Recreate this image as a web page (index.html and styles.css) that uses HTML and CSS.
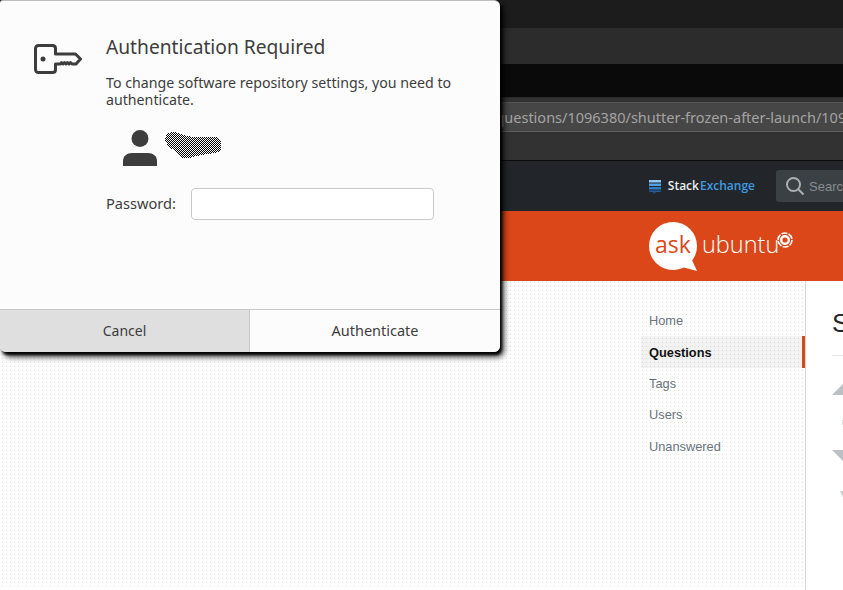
FILE: index.html
```html
<!DOCTYPE html>
<html>
<head>
  <title>Authentication Required</title>
  <link rel="stylesheet" href="styles.css">
</head>
<body>

  <!-- Browser behind the dialog -->
  <div class="browser">
    <div class="bar-title"></div>
    <div class="bar-menu"></div>
    <div class="bar-tabs"></div>
    <div class="bar-url">
      <div class="url-field">askubuntu.com/questions/1096380/shutter-frozen-after-launch/1096380#1096380</div>
    </div>

    <div class="se-bar">
      <div class="se-logo">
        <svg width="14" height="15" viewBox="0 0 14 15">
          <path d="M1 1h12v2.500H1z" fill="#8fc8f2"/>
          <path d="M1 4.500h12V7H1z" fill="#4ea3e6"/>
          <path d="M1 8h12v2.500H1z" fill="#2b7ec4"/>
          <path d="M1 11.500h12c0 1-.6 1.500-1.500 1.500H8l-2.500 2v-2h-3C1.600 13 1 12.500 1 11.500z" fill="#1f5f9e"/>
        </svg>
        <span class="se-stack">Stack</span><span class="se-exchange">Exchange</span>
      </div>
      <div class="se-search">
        <svg width="20" height="20" viewBox="0 0 20 20" fill="none" stroke="#a9b0b5" stroke-width="2">
          <circle cx="8.500" cy="8.500" r="6.500"/>
          <path d="M13.500 13.500l5 5"/>
        </svg>
        <span>Search</span>
      </div>
    </div>

    <div class="brand-bar">
      <div class="brand">
        <div class="ask-bubble">ask</div>
        <span class="brand-name">ubuntu</span>
        <svg class="cof" width="16" height="16" viewBox="0 0 16 16" fill="none" stroke="#fff">
          <circle cx="8" cy="8" r="3.800" stroke-width="2.400"/>
          <circle cx="8" cy="8" r="7" stroke-width="1.600" stroke-dasharray="6 1.300"/>
        </svg>
      </div>
    </div>

    <div class="content">
      <nav class="side-nav">
        <a>Home</a>
        <a class="active">Questions</a>
        <a>Tags</a>
        <a>Users</a>
        <a>Unanswered</a>
      </nav>
      <div class="question">
        <div class="q-title">S</div>
        <div class="q-rule"></div>
        <div class="vote-up"></div>
        <div class="vote-count"></div>
        <div class="vote-down"></div>
        <div class="vote-star"></div>
      </div>
    </div>
  </div>

  <!-- Auth dialog -->
  <div class="dialog">
    <div class="dialog-body">
      <svg class="key-icon" width="48" height="30" viewBox="0 0 48 30" fill="none" stroke="#3d3d3d" stroke-width="3" stroke-linejoin="round">
        <path d="M4.500 1.500h14c1.800 0 3 1.200 3 3V10h20l5 5-4.500 5h-4l-1.500-1.500-1.500 1.500-1.500-1.500-1.500 1.500-1.500-1.500-1.500 1.500-1.500-1.500-1 1.500H21.500v5.500c0 1.800-1.200 3-3 3h-14c-1.800 0-3-1.200-3-3v-21c0-1.800 1.200-3 3-3z"/>
        <circle cx="9" cy="15" r="2.500" fill="#3d3d3d" stroke="none"/>
      </svg>
      <div class="dialog-text">
        <h1>Authentication Required</h1>
        <p>To change software repository settings, you need to authenticate.</p>
        <div class="user-row">
          <svg width="34" height="36" viewBox="0 0 34 36" fill="#3d3d3d">
            <circle cx="17" cy="8.500" r="8.500"/>
            <path d="M0 36v-5c0-5 4-8 9-8h16c5 0 9 3 9 8v5z"/>
          </svg>
          <svg class="scribble" width="56" height="28" viewBox="0 0 56 28" shape-rendering="crispEdges">
            <defs>
              <pattern id="check" width="2" height="2" patternUnits="userSpaceOnUse">
                <rect width="2" height="2" fill="#fff"/>
                <rect width="1" height="1" fill="#000"/>
                <rect x="1" y="1" width="1" height="1" fill="#000"/>
              </pattern>
            </defs>
            <path d="M0 6C1 2 4 0 8 0c6 0 12 5 22 5h20c4 0 6 3 6 7v7l-6 2c-8 1-16 2-22 4-6 2-11 2-14-1-2-4-6-6-10-9C1 12 0 9 0 6z" fill="url(#check)"/>
          </svg>
        </div>
        <div class="password-row">
          <label>Password:</label>
          <div class="password-input"></div>
        </div>
      </div>
    </div>
    <div class="dialog-buttons">
      <button class="btn-cancel">Cancel</button>
      <button class="btn-auth">Authenticate</button>
    </div>
  </div>

</body>
</html>
```

FILE: styles.css
```css
html, body {
  margin: 0;
  padding: 0;
  height: 100%;
  overflow: hidden;
}

body {
  font-family: "Liberation Sans", sans-serif;
  background: #fff;
}

.browser {
  display: flex;
  flex-direction: column;
  height: 590px;
}

.bar-title {
  height: 28px;
  background: #1c1c1c;
}

.bar-menu {
  height: 36px;
  background: #2d2c2c;
}

.bar-tabs {
  height: 33px;
  background: #0a0a0a;
}

.bar-url {
  height: 64px;
  box-sizing: border-box;
  background: #333232;
  padding-top: 4px;
  border-top: 1px solid #2a2a2a;
  border-bottom: 1px solid #0c0c0c;
}

.url-field {
  height: 30px;
  box-sizing: border-box;
  background: #474646;
  border-top: 1px solid #555;
  border-bottom: 1px solid #5e5e5e;
  color: #a3a3a3;
  font-family: "Noto Sans", sans-serif;
  font-size: 14.500px;
  line-height: 29px;
  white-space: nowrap;
  overflow: hidden;
  padding-left: 384px;
}

.se-bar {
  height: 50px;
  box-sizing: border-box;
  background: #22262a;
  display: flex;
  align-items: center;
  justify-content: flex-end;
}

.se-logo {
  display: flex;
  align-items: center;
  font-family: "Open Sans", sans-serif;
  font-size: 12px;
  font-weight: 600;
  margin-right: 21px;
  padding-bottom: 2px;
}

.se-logo svg {
  margin: 2px 6px 0 0;
}

.se-stack {
  color: #eee;
  margin-right: 1px;
}

.se-exchange {
  color: #3d9be0;
}

.se-search {
  width: 67px;
  height: 32px;
  box-sizing: border-box;
  background: #3b4045;
  border-radius: 3px 0 0 3px;
  display: flex;
  align-items: center;
  padding-left: 9px;
  gap: 4px;
  overflow: hidden;
  color: #858c92;
  font-size: 13px;
  white-space: nowrap;
}

.se-search svg {
  flex: none;
}

.brand-bar {
  height: 70px;
  background: #dc4719;
  padding-left: 649px;
}

.brand {
  display: flex;
  align-items: flex-start;
  color: #fff;
}

.ask-bubble {
  position: relative;
  width: 48px;
  height: 48px;
  margin-top: 11px;
  background: #fff;
  border-radius: 50%;
  color: #dc4719;
  font-family: "Open Sans", sans-serif;
  font-size: 23px;
  line-height: 45px;
  text-align: center;
}

.ask-bubble::after {
  content: "";
  position: absolute;
  right: 0;
  bottom: -1px;
  width: 16px;
  height: 14px;
  background: #fff;
  clip-path: polygon(100% 100%, 0 70%, 60% 0);
}

.brand-name {
  font-family: "Open Sans", sans-serif;
  font-size: 23.500px;
  font-weight: 300;
  line-height: 30px;
  margin: 18px 0 0 5px;
}

.cof {
  margin: 21px 0 0 -2px;
}

.content {
  flex: 1;
  display: flex;
  justify-content: flex-end;
  background-color: #fff;
  background-image: url("data:image/svg+xml,%3Csvg xmlns='http://www.w3.org/2000/svg' width='4' height='4'%3E%3Crect width='1' height='1' fill='%23e2e2e2'/%3E%3C/svg%3E");
  background-size: 4px 4px;
  background-position: 2px 1px;
}

.side-nav {
  width: 165px;
  box-sizing: border-box;
  padding-top: 24px;
  border-right: 1px solid #d6d9dc;
  font-size: 12.800px;
  color: #6a737c;
}

.side-nav a {
  display: block;
  height: 31.400px;
  line-height: 31.400px;
  padding-left: 8px;
}

.side-nav a.active {
  background: rgba(0, 0, 0, 0.05);
  border-right: 3px solid #dc4719;
  color: #111;
  font-weight: bold;
  line-height: 33px;
}

.question {
  width: 37px;
  background: #fff;
  box-sizing: border-box;
  padding: 24px 0 0 26px;
  overflow: hidden;
}

.q-title {
  font-size: 26px;
  line-height: 36px;
  color: #242729;
}

.q-rule {
  height: 1px;
  width: 20px;
  background: #e4e6e8;
  margin-top: 14px;
}

.vote-up {
  width: 0;
  margin-top: 21px;
  border-left: 18px solid transparent;
  border-right: 18px solid transparent;
  border-bottom: 18px solid #bbc0c4;
}

.vote-count {
  width: 4px;
  height: 5px;
  margin: 25px 0 0 10px;
  background: #dcdfe1;
}

.vote-down {
  width: 0;
  margin-top: 25px;
  border-left: 18px solid transparent;
  border-right: 18px solid transparent;
  border-top: 18px solid #bbc0c4;
}

.vote-star {
  width: 0;
  margin: 23px 0 0 8px;
  border-left: 4px solid transparent;
  border-right: 4px solid transparent;
  border-top: 9px solid #ccd0d3;
}

.dialog {
  position: absolute;
  left: 0;
  top: 0;
  width: 500px;
  height: 352px;
  box-sizing: border-box;
  display: flex;
  flex-direction: column;
  background: #fcfcfc;
  border-top: 1px solid #bdbdbd;
  border-radius: 3px 6px 6px 6px;
  overflow: hidden;
  box-shadow: 2px 3px 3px #000, 4px 5px 6px rgba(0, 0, 0, 0.7);
}

.dialog-body {
  flex: 1;
  display: flex;
  padding: 43px 0 0 34px;
  color: #3d3d3d;
  font-family: "Noto Sans", sans-serif;
}

.key-icon {
  flex: none;
  margin-right: 24px;
}

.dialog-text {
  flex: 1;
  padding-right: 40px;
  margin-top: -10px;
}

.dialog-text h1 {
  margin: 0;
  font-size: 19.200px;
  font-weight: 400;
  line-height: 26px;
}

.dialog-text p {
  margin: 14px 0 0;
  font-size: 14.200px;
  line-height: 17px;
}

.user-row {
  display: flex;
  align-items: flex-start;
  margin: 22px 0 0 17px;
}

.scribble {
  margin: 2px 0 0 8px;
}

.password-row {
  display: flex;
  align-items: center;
  margin-top: 22px;
  font-size: 14.600px;
}

.password-row label {
  width: 85px;
  padding-bottom: 2px;
}

.password-input {
  width: 243px;
  height: 32px;
  box-sizing: border-box;
  background: #fff;
  border: 1px solid #c9c9c9;
  border-radius: 4px;
}

.dialog-buttons {
  display: flex;
  height: 43px;
  box-sizing: border-box;
  border-top: 1px solid #c9c9c9;
}

.dialog-buttons button {
  padding: 0 0 2px;
  border: none;
  font-family: "Noto Sans", sans-serif;
  font-size: 14px;
  color: #3d3d3d;
}

.dialog-buttons .btn-cancel {
  flex: none;
  width: 250px;
  background: #dfdfdf;
  border-right: 1px solid #c9c9c9;
}

.dialog-buttons .btn-auth {
  flex: 1;
  background: #fcfcfc;
  font-size: 14.500px;
}
```
